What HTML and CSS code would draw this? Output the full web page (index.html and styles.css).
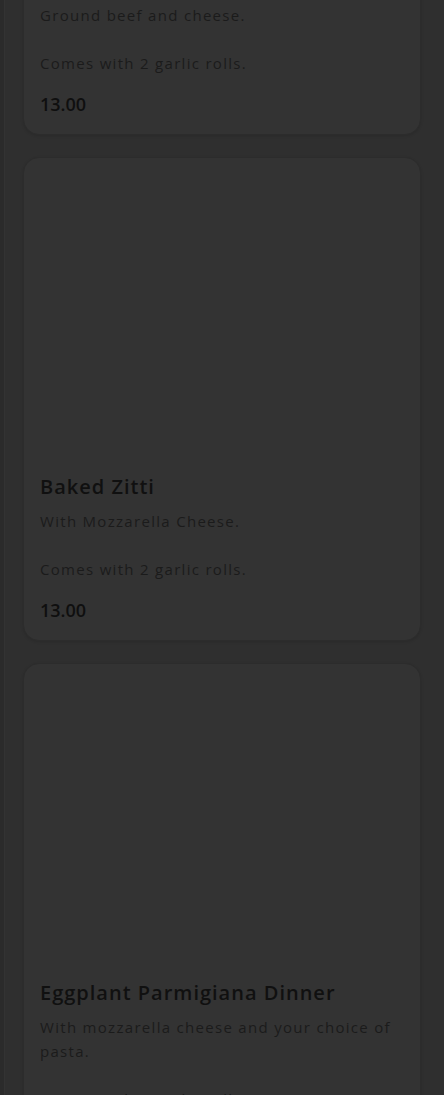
FILE: index.html
```html
<!DOCTYPE html>
<html lang="en">
<head>
    <meta charset="UTF-8">
    <meta name="viewport" content="width=device-width, initial-scale=1.0">
    <title>Menu</title>
    <link rel="stylesheet" href="styles.css">
</head>
<body>
<div class="overlay">
    <div class="menu">
        <div class="item">
            <div class="photo"></div>
            <div class="info">
                <h3>Lasagna</h3>
                <p class="desc">Ground beef and cheese.

Comes with 2 garlic rolls.</p>
                <div class="price">13.00</div>
            </div>
        </div>
        <div class="item">
            <div class="photo"></div>
            <div class="info">
                <h3>Baked Zitti</h3>
                <p class="desc">With Mozzarella Cheese.

Comes with 2 garlic rolls.</p>
                <div class="price">13.00</div>
            </div>
        </div>
        <div class="item">
            <div class="photo"></div>
            <div class="info">
                <h3>Eggplant Parmigiana Dinner</h3>
                <p class="desc">With mozzarella cheese and your choice of pasta.

Comes with 2 garlic rolls.</p>
                <div class="price">14.00</div>
            </div>
        </div>
    </div>
</div>
</body>
</html>
```

FILE: styles.css
```css
* {
    margin: 0;
    padding: 0;
    box-sizing: border-box;
}

body {
    background: #2f2f2f;
    font-family: 'Open Sans', 'Liberation Sans', sans-serif;
    color: #121212;
}

.overlay {
    height: 100vh;
    overflow: hidden;
    border-left: 4px solid #2b2b2b;
    box-shadow: inset 1px 0 0 #333;
}

.menu {
    display: flex;
    flex-direction: column;
    gap: 22px;
    padding: 0 23px 0 19px;
    margin-top: -349px;
}

.item {
    background: #333333;
    border: 1px solid #2c2c2c;
    border-radius: 16px;
    box-shadow: 0 1px 3px rgba(0, 0, 0, .12);
    overflow: hidden;
}

.photo {
    height: 297px;
}

.info {
    padding: 20px 16px 18px;
}

.info h3 {
    font-size: 20px;
    line-height: 24px;
    font-weight: 600;
    letter-spacing: 1px;
    color: #101010;
}

.desc {
    margin-top: 10px;
    font-size: 15px;
    line-height: 24px;
    letter-spacing: 1.3px;
    white-space: pre-line;
    color: #1b1b1b;
}

.price {
    margin-top: 17px;
    font-size: 18px;
    line-height: 24px;
    font-weight: 600;
    color: #0f0f0f;
}
```
